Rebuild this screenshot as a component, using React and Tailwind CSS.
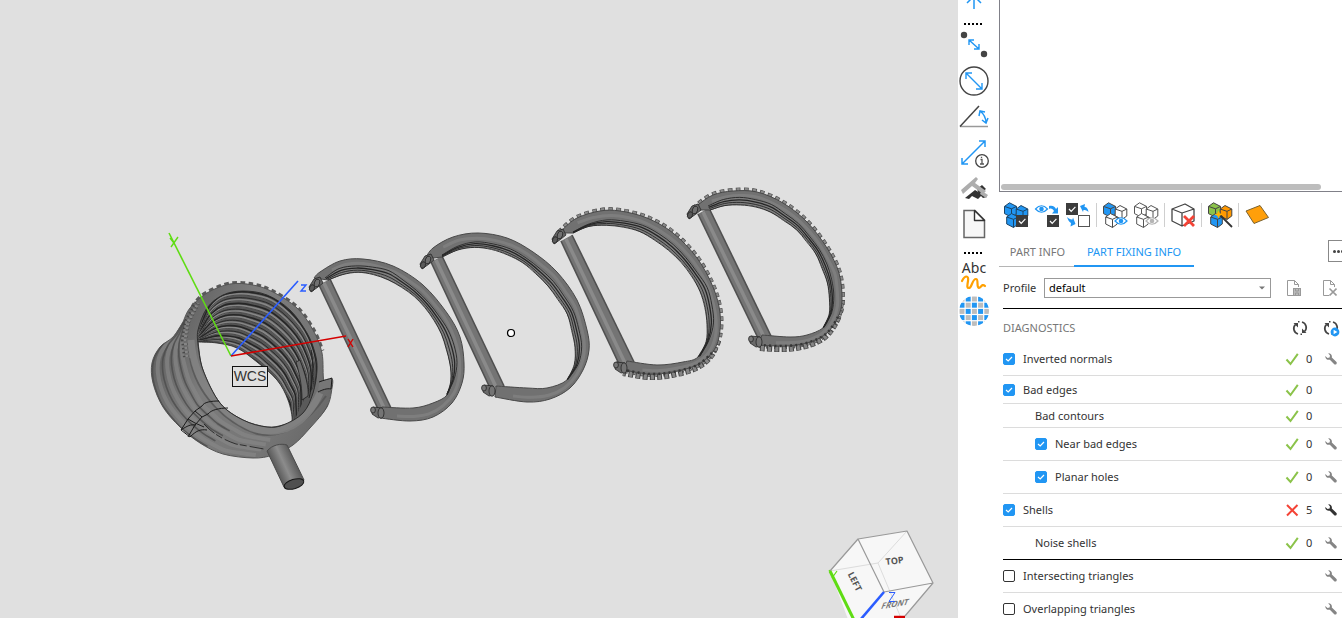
import React from "react";

/* ---------- geometry helpers for the 3D scene ---------- */

const parse = (s) => s.split(" ").map((p) => p.split(",").map(Number));

function resample(pts, n) {
  const len = [0];
  for (let i = 1; i < pts.length; i++)
    len.push(len[i - 1] + Math.hypot(pts[i][0] - pts[i - 1][0], pts[i][1] - pts[i - 1][1]));
  const total = len[len.length - 1];
  const out = [];
  let j = 1;
  for (let i = 0; i < n; i++) {
    const t = (total * i) / (n - 1);
    while (j < pts.length - 1 && len[j] < t) j++;
    const k = (t - len[j - 1]) / (len[j] - len[j - 1] || 1);
    out.push([
      pts[j - 1][0] + (pts[j][0] - pts[j - 1][0]) * k,
      pts[j - 1][1] + (pts[j][1] - pts[j - 1][1]) * k,
    ]);
  }
  return out;
}

function mix(a, b, t, n = 14) {
  const ra = resample(a, n);
  const rb = resample(b, n);
  return ra.map((p, i) => [p[0] + (rb[i][0] - p[0]) * t, p[1] + (rb[i][1] - p[1]) * t]);
}

function curve(pts, start = "M") {
  let d = `${start}${pts[0][0]} ${pts[0][1]}`;
  for (let i = 0; i < pts.length - 1; i++) {
    const p0 = pts[i - 1] || pts[i];
    const p1 = pts[i];
    const p2 = pts[i + 1];
    const p3 = pts[i + 2] || p2;
    d += `C${(p1[0] + (p2[0] - p0[0]) / 6).toFixed(2)} ${(p1[1] + (p2[1] - p0[1]) / 6).toFixed(2)} ${(p2[0] - (p3[0] - p1[0]) / 6).toFixed(2)} ${(p2[1] - (p3[1] - p1[1]) / 6).toFixed(2)} ${p2[0].toFixed(2)} ${p2[1].toFixed(2)}`;
  }
  return d;
}

const RINGS = [
  {
    outer: "314,278 320,272 340,261 363,259 393,266 423,285 447,313 460,337 464,363 462,383 452,403 433,417 410,421 380,418",
    inner: "328,280 347,273 363,272 383,277 410,292 430,313 443,337 450,363 451,380 447,395 433,403 413,408 382,407",
    seam: "325,278 340,268 363,265 390,271 413,287 433,307 448,330 457,353 457,373 447,394",
    bar: "319,285 330,279 391,408 379,411",
    top: [315, 285],
    end: [377, 411],
    bumps: false,
  },
  {
    outer: "425,259 433,248 453,237 478,233 507,238 533,252 557,272 577,300 587,330 589,350 583,370 570,388 550,399 527,402 495,397",
    inner: "442,257 460,249 478,247 500,251 527,265 550,288 567,313 575,343 575,363 567,380 547,388 527,388 496,386",
    seam: "442,255 460,245 480,241 507,247 533,262 557,285 573,310 582,340 581,360 568,379",
    bar: "431,262 442,256 504,386 490,388",
    top: [426, 262],
    end: [488, 389],
    bumps: false,
  },
  {
    outer: "559,233 562,230 577,218 600,211 620,211 647,218 673,233 697,258 713,287 720,313 719,337 712,353 697,365 673,372 650,374 624,370",
    inner: "573,233 590,226 613,225 637,230 663,245 687,268 702,295 707,317 707,340 698,357 683,362 657,365 627,361",
    seam: "573,232 593,222 613,219 640,224 667,238 690,262 707,287 714,313 713,333 700,356",
    bar: "561,241 572,235 634,362 619,364",
    top: [558, 237],
    end: [620, 366],
    bumps: true,
  },
  {
    outer: "694,210 698,205 713,195 733,191 757,192 783,203 807,222 827,248 839,273 842,300 838,317 827,333 810,342 787,346 759,345",
    inner: "710,210 727,205 750,205 773,213 797,230 815,252 827,280 830,303 829,317 823,328 807,335 790,337 762,335",
    seam: "708,206 727,198 747,197 773,205 797,222 817,245 830,270 834,293 833,310 824,327",
    bar: "698,214 709,208 771,336 758,338",
    top: [693, 212],
    end: [755, 340],
    bumps: true,
  },
];

function Ring({ ring }) {
  const outer = parse(ring.outer);
  const inner = parse(ring.inner);
  const seam = parse(ring.seam);
  const hole = inner.slice(0, -3);
  const body = `${curve(outer)}L${curve([...inner].reverse(), "")}Z`;
  const lowest = outer.slice(-6);
  const [tx, ty] = ring.top;
  const [ex, ey] = ring.end;
  const [b0, b1, b2, b3] = parse(ring.bar);
  return (
    <g>
      {ring.bumps && (
        <g fill="none">
          <path d={curve(outer)} stroke="#4a4a4a" strokeWidth="6" strokeDasharray="4.600 3.400" />
          <path d={curve(outer)} stroke="#8a8a8a" strokeWidth="5" strokeDasharray="3.200 4.800" strokeDashoffset="-0.700" />
          <g transform="translate(-1 3)">
            <path d={curve(lowest)} stroke="#444" strokeWidth="6" strokeDasharray="5 2.200" />
            <path d={curve(lowest)} stroke="#868686" strokeWidth="5" strokeDasharray="3 4.200" strokeDashoffset="-1" />
          </g>
        </g>
      )}
      <path d={`M${b0}L${b1}L${b2}L${b3}Z`} fill="#747474" />
      <path d={`M${b0}L${b3}`} stroke="#505050" strokeWidth="1.600" />
      <path d={`M${b0[0] + 5} ${b0[1] - 2}L${b3[0] + 6} ${b3[1] - 1}`} stroke="#8a8a8a" strokeWidth="3.500" />
      <path d={`M${b1}L${b2}`} stroke="#505050" strokeWidth="1.600" />
      <path d={body} fill="#717171" stroke="#484848" strokeWidth="1" />
      <path d={curve(mix(outer, inner, 0.3, 20).slice(1, -1))} fill="none" stroke="#848484" strokeWidth="3" opacity="0.700" />
      <path d={`${curve(seam)}L${curve([...hole].reverse(), "")}Z`} fill="#7e7e7e" />
      {[0, 0.33, 0.66, 1].map((t, i) => (
        <path key={t} d={curve(mix(seam, hole, t))} fill="none" stroke="#262626" strokeWidth={i === 1 ? 1.3 : 0.9} />
      ))}
      {ring.bumps && (
        <path d={curve(lowest.slice(1))} fill="none" stroke="#363636" strokeWidth="2.500" strokeDasharray="2 3.200" />
      )}
      <g stroke="#262626" strokeWidth="0.800">
        <path d={`M${tx - 6} ${ty + 2}l5-8 6-2 3 6-5 4-7 5z`} fill="#666" />
        <ellipse cx={tx - 3} cy={ty + 3} rx="2.400" ry="3.400" fill="#5a5a5a" transform={`rotate(20 ${tx - 3} ${ty + 3})`} />
        <ellipse cx={tx + 2} cy={ty - 2} rx="2.600" ry="4" fill="#707070" transform={`rotate(20 ${tx + 2} ${ty - 2})`} />
        <path d={`M${ex - 4} ${ey - 4}l9 1 1 9-5 1-6-4z`} fill="#6a6a6a" />
        <ellipse cx={ex - 4} cy={ey - 1} rx="2.400" ry="3" fill="#777" />
        <ellipse cx={ex + 4} cy={ey + 2} rx="3" ry="5.200" fill="#747474" />
      </g>
    </g>
  );
}

const COIL = {
  silhouette:
    "183,322 173,337 160,347 152,363 153,383 163,407 180,427 200,443 223,454 253,458 273,455 293,445 310,428 327,407 332,388 332,379 324,381 322,353 313,330 297,308 273,292 253,285 230,284 207,293 190,308 183,322",
  left: "183,322 173,337 160,347 152,363 153,383 163,407 180,427 200,443 223,454 253,458",
  front: "186,318 184,340 188,360 195,380 207,402 227,420 250,433 273,437",
  rim: "198,345 198,330 207,308 223,295 243,291 267,295 290,310 307,333 315,353 317,370 313,393 303,413 283,425 267,427 243,420 220,403 203,370 198,345",
  rimTop: "198,335 207,308 223,295 243,291 267,295 290,310 307,333 315,353 317,370 314,393",
  holeTop: "198,342 217,343 237,348 257,362 277,380 290,403 292,424",
  hole: "198,342 217,343 237,348 257,362 277,380 288,400 292,421 283,425 267,427 243,420 220,403 203,370 198,342",
  bumps: "187,354 184,340 187,322 195,304 207,293 230,284 253,285 273,292 297,308 313,330 322,351",
};

function Coil() {
  const left = parse(COIL.left);
  const front = parse(COIL.front);
  const rimTop = parse(COIL.rimTop);
  const holeTop = parse(COIL.holeTop);
  const steps = Array.from({ length: 11 }, (_, i) => i / 10);
  return (
    <g>
      <clipPath id="coil-rim">
        <path d={curve(parse(COIL.rim))} />
      </clipPath>
      <clipPath id="coil-body">
        <path d={curve(parse(COIL.silhouette))} />
      </clipPath>
      <path d={curve(parse(COIL.bumps))} fill="none" stroke="#5a5a5a" strokeWidth="5" strokeDasharray="4.600 3.400" />
      <path d={curve(parse(COIL.silhouette))} fill="url(#coil-shade)" stroke="#555" />
      <g fill="none" clipPath="url(#coil-body)">
        {[0.14, 0.4, 0.64, 0.86].map((t) => (
          <path key={t} d={curve(mix(left, front, t))} stroke="#868686" strokeWidth="4" opacity="0.700" />
        ))}
        {[0, 0.27, 0.52, 0.75].map((t) => (
          <path key={t} d={curve(mix(left, front, t).slice(0, 11))} stroke="#4a4a4a" strokeWidth="1.600" opacity="0.750" />
        ))}
        <path d="M190 358C196 394 226 424 258 434C290 440 312 416 326 396" stroke="#555" strokeWidth="2" opacity="0.800" />
        <path d="M278 458C298 446 318 424 328 404L336 410L300 458Z" fill="#4b4b4b" />
        <path d="M191 340C194 385 222 415 252 428C282 438 306 424 320 393" stroke="#858585" strokeWidth="7" opacity="0.800" />
      </g>
      <path d="M186 357L184 340L187 322L197 303" fill="none" stroke="#3a3a3a" strokeWidth="6" strokeDasharray="1.400 2.600" opacity="0.750" />
      <path d="M187 357L185 340L188 322L198 303" fill="none" stroke="#858585" strokeWidth="3" strokeDasharray="2.200 1.800" />
      <path d={curve(parse(COIL.rim))} fill="#555" />
      <g clipPath="url(#coil-rim)" fill="none">
        {steps.map((t, i) => (
          <g key={t}>
            <path d={curve(mix(rimTop, holeTop, t + 0.04))} stroke="#868686" strokeWidth="2.400" />
            <path d={curve(mix(rimTop, holeTop, t))} stroke="#262626" strokeWidth={i % 2 ? 0.9 : 1.6} />
            <path d={curve(mix(rimTop, holeTop, t + 0.055))} stroke="#333" strokeWidth="0.700" />
          </g>
        ))}
        <path d="M305 398L299 410L293 424L317 410L320 380Z" fill="#5a5a5a" />
        <path d="M300 360C306 376 309 388 308 396L302 400C302 384 299 372 296 362Z" fill="#6c6c6c" stroke="#222" strokeWidth="0.800" />
        <path d="M311 350C314 365 313 384 309 398" stroke="#242424" />
      </g>
      <path d={curve(parse(COIL.hole))} fill="#e0e0e0" stroke="#333" strokeWidth="0.900" clipPath="url(#coil-rim)" />
      <path d={curve(parse(COIL.rim))} fill="none" stroke="#2a2a2a" strokeWidth="0.900" />
      <g fill="none" stroke="#1c1c1c" strokeWidth="1">
        <path d="M219 401C211 401 204 402 202 406L195 411M228 408C219 408 211 410 208 414L202 417M195 411L202 417M195 411L188 419L181 430L190 437M202 417L195 425L188 437M188 419L195 423L204 427" />
        <path d="M204 424C213 434 224 440 236 444L264 449" strokeDasharray="14 2 7 3" strokeWidth="0.800" />
        <path d="M181 430C187 426 191 424 196 425M190 437C196 431 200 429 207 430" />
        <path d="M319 382C324 380 329 379 332 378L331 389C327 388 322 390 318 392" fill="#777" />
      </g>
      <path d="M267 451C272 445 281 443 287 445L304 480L284 487Z" fill="url(#post-shade)" stroke="#4a4a4a" />
      <ellipse cx="294" cy="484" rx="10.200" ry="4.600" fill="#505050" stroke="#171717" transform="rotate(-17 294 484)" />
    </g>
  );
}

function Scene() {
  return (
    <svg
      viewBox="0 0 958 618"
      preserveAspectRatio="xMinYMin slice"
      className="block h-full w-full"
      role="img"
      aria-label="3D view"
      fontFamily="'Liberation Sans', Arial, sans-serif"
    >
      <defs>
        <linearGradient id="coil-shade" x1="0" y1="0.3" x2="1" y2="0.8">
          <stop offset="0" stopColor="#5c5c5c" />
          <stop offset="0.35" stopColor="#7c7c7c" />
          <stop offset="0.75" stopColor="#757575" />
          <stop offset="1" stopColor="#666" />
        </linearGradient>
        <linearGradient id="post-shade" gradientUnits="userSpaceOnUse" x1="275" y1="470" x2="297" y2="460">
          <stop offset="0" stopColor="#555" />
          <stop offset="0.45" stopColor="#8c8c8c" />
          <stop offset="1" stopColor="#505050" />
        </linearGradient>
      </defs>
      {RINGS.map((r) => (
        <Ring key={r.bar} ring={r} />
      ))}
      <Coil />

      <g fill="none" strokeWidth="1.600">
        <path d="M169 233L231 356" stroke="#5fdc14" />
        <path d="M231 356L298 281" stroke="#2a5cff" />
        <path d="M231 356L346 336" stroke="#d40000" />
        <path d="M170 238L174 243M178 237L171 247" stroke="#5fdc14" strokeWidth="1.400" />
        <path d="M301 285H306L301 291H306" stroke="#2a5cff" strokeWidth="1.400" />
        <path d="M348 339L353 347M353 339L348 347" stroke="#d40000" strokeWidth="1.400" />
      </g>
      <rect x="232.500" y="366.500" width="35" height="20" fill="#e0e0e0" stroke="#111" />
      <text x="250" y="381" textAnchor="middle" fontSize="14" fill="#333">
        WCS
      </text>
      <circle cx="511" cy="333" r="3.500" fill="#fff" stroke="#000" strokeWidth="1.200" />

      <g strokeLinejoin="round">
        <path d="M858 539L907 531L933 583L905 616L900 630H852L830 571Z" fill="#f7f7f7" />
        <path d="M878 563L907 531M878 563L830 571M878 563L901 618" fill="none" stroke="#dcdcdc" />
        <path d="M858 539L907 531L933 583L884 592ZM858 539L830 571M933 583L905 616" fill="none" stroke="#999" strokeWidth="1.200" />
      </g>
      <g fill="#555" fontWeight="700" fontFamily="'Open Sans', sans-serif" textAnchor="middle">
        <text fontSize="9" transform="translate(895 564) rotate(-7)">TOP</text>
        <text fontSize="9" transform="translate(852 583) rotate(63)">LEFT</text>
        <text fontSize="8" fill="#777" transform="translate(894 607) rotate(-9) skewX(-30)">FRONT</text>
      </g>
      <path d="M830 571L854 620" stroke="#5fdc14" strokeWidth="3" />
      <path d="M829 570L833 576M837 571L832 578" stroke="#5fdc14" strokeWidth="1.200" />
      <path d="M884 592L861 619" stroke="#2a5cff" strokeWidth="2.600" />
      <path d="M889 592.500H895L889 601.500H895" fill="none" stroke="#2a5cff" />
      <path d="M894 617H905" stroke="#d40000" strokeWidth="2.500" />
    </svg>
  );
}

/* ---------- measuring tool strip ---------- */

const BLUE = "#2196f3";

function ToolButton({ label, size = "h-9", children, box = "0 0 32 36" }) {
  return (
    <button type="button" aria-label={label} className={`${size} block w-8 shrink-0`}>
      <svg viewBox={box} className="block h-full w-full overflow-visible" fill="none">
        {children}
      </svg>
    </button>
  );
}

function Dots({ size }) {
  return (
    <div className={`${size} flex w-8 shrink-0 items-center justify-center gap-0.5 pr-0.5`}>
      {[0, 1, 2, 3, 4].map((i) => (
        <span key={i} className="size-0.5 bg-black" />
      ))}
    </div>
  );
}

function ToolStrip() {
  const globe = [];
  for (let r = 0; r < 5; r++)
    for (let c = 0; c < 5; c++)
      globe.push(
        <rect key={`${r}${c}`} x={1.5 + c * 6.2} y={5.5 + r * 6.2} width="5" height="5" fill={(r + c) % 2 ? BLUE : "#bdbdbd"} />
      );
  return (
    <nav aria-label="Measure tools" className="flex w-[41px] shrink-0 flex-col bg-white">
      <ToolButton label="Up" size="h-5" box="0 0 32 20">
        <path d="M16 9V-4M9 3L16-4L23 3" stroke={BLUE} strokeWidth="1.500" />
      </ToolButton>
      <Dots size="h-[7px]" />
      <ToolButton label="Measure points">
        <circle cx="6" cy="8" r="3.200" fill="#444" />
        <circle cx="26" cy="27" r="3.200" fill="#444" />
        <path d="M11 13L21 22M11 18V13H16M21 17V22H16" stroke={BLUE} strokeWidth="1.400" />
      </ToolButton>
      <ToolButton label="Measure diameter">
        <circle cx="16" cy="18" r="14" stroke="#444" strokeWidth="1.400" />
        <path d="M8 10L24 26M8 16V10H14M24 20V26H18" stroke={BLUE} strokeWidth="1.400" />
      </ToolButton>
      <ToolButton label="Measure angle">
        <path d="M2 27.500H30" stroke="#999" strokeWidth="1.500" />
        <path d="M2 27.500L21 7" stroke="#444" strokeWidth="1.500" />
        <path d="M22 12C26 15 28 19 28 24M21 17L22 12L27 13M24 21L28 24L30 19" stroke={BLUE} strokeWidth="1.500" />
      </ToolButton>
      <ToolButton label="Measure info">
        <path d="M4 29L27 6M4 23V29H10M21 6H27V12" stroke={BLUE} strokeWidth="1.500" />
        <circle cx="24" cy="26" r="6.300" fill="#fff" stroke="#444" strokeWidth="1.300" />
        <path d="M22.500 24.500H24V29M22 29H26M23.500 21.800V23" stroke="#555" strokeWidth="1.300" />
      </ToolButton>
      <ToolButton label="Caliper">
        <path d="M7 27L17 19L29 26L25 27L23 25L20 28L14 25L11 28Z" fill="#333" />
        <path d="M19 18L24 14L28 18L21 23Z" fill="#333" />
        <path d="M3 19L18 6L20 8L17 12L28 20L25 23L14 15L5 23Z" fill="#adadad" />
        <path d="M24 20L30 24L28 27L22 23Z" fill="#adadad" />
      </ToolButton>
      <ToolButton label="New page">
        <path d="M6 3.500H17L26.500 13V30.500H6Z" fill="#f7f7f7" stroke="#666" strokeWidth="1.500" />
        <path d="M16.500 3.500V13.500H26.500Z" fill="#fff" stroke="#333" strokeWidth="1.400" strokeLinejoin="round" />
      </ToolButton>
      <Dots size="h-5" />
      <ToolButton label="Annotation" size="h-7" box="0 0 32 28">
        <text x="16" y="10" textAnchor="middle" fontSize="14" fill="#333" fontFamily="'Noto Sans', sans-serif">
          Abc
        </text>
        <path d="M4 18C7 12 11 12 10 18C9 24 9 25 11 25C14 25 14 16 18 16C21 16 18 24 21 25C23 25 24 20 27 23" stroke="#ffa000" strokeWidth="2.200" strokeLinecap="round" />
      </ToolButton>
      <ToolButton label="Grid" size="h-10" box="0 0 32 40">
        <clipPath id="globe">
          <circle cx="16" cy="20" r="15" />
        </clipPath>
        <g clipPath="url(#globe)">{globe}</g>
      </ToolButton>
    </nav>
  );
}

/* ---------- part toolbar ---------- */

function Cube({ x, y, s = 6, fill = "#fff", stroke = "#444" }) {
  const h = s * 0.4;
  return (
    <g fill={fill} stroke={stroke} strokeWidth="1" strokeLinejoin="round">
      <path d={`M${x - s} ${y - s + h}L${x - 1} ${y - s - h / 2}L${x + s} ${y - s + h}V${y + s - h}L${x + 1} ${y + s + h / 2}L${x - s} ${y + s - h}Z`} />
      <path d={`M${x - s} ${y - s + h}L${x + 1} ${y - s + h * 2}L${x + s} ${y - s + h}M${x + 1} ${y - s + h * 2}V${y + s + h / 2}`} fill="none" />
    </g>
  );
}

const Cubes = ({ a, b, c, stroke }) => (
  <g>
    <Cube x={6.5} y={7} s={6} fill={a} stroke={stroke} />
    <Cube x={18} y={9.5} s={5.8} fill={b} stroke={stroke} />
    <Cube x={8.5} y={17.5} s={5.8} fill={c} stroke={stroke} />
  </g>
);

const DarkCheck = ({ x, y }) => (
  <g>
    <rect x={x} y={y} width="12" height="12" fill="#3c3c3c" />
    <path d={`M${x + 3} ${y + 6}l2.200 2.400l4.200-4.600`} fill="none" stroke="#fff" strokeWidth="1.200" />
  </g>
);

const Eye = ({ x, y, color = BLUE }) => (
  <g>
    <path d={`M${x - 6} ${y}q6-6.500 12 0q-6 6.500-12 0z`} fill="#fff" stroke={color} strokeWidth="1.200" />
    <circle cx={x} cy={y} r="2.300" fill={color} />
  </g>
);

function IconButton({ label, children }) {
  return (
    <button type="button" aria-label={label} className="block size-6 shrink-0">
      <svg viewBox="0 0 24 24" className="block size-6 overflow-visible">
        {children}
      </svg>
    </button>
  );
}

const Divider = () => <span className="mx-1.5 h-6 w-px shrink-0 bg-[#cfcfcf]" />;

function PartToolbar() {
  return (
    <div className="flex h-[46px] shrink-0 items-center pl-[5px]">
      <div className="flex gap-[7px]">
        <IconButton label="Select parts">
          <Cubes a={BLUE} b={BLUE} c={BLUE} stroke="#1b4466" />
          <DarkCheck x={12} y={12} />
        </IconButton>
        <IconButton label="Select visible">
          <Eye x={6.500} y={6} />
          <path d="M14 3C18 2 20 4 21 6L23 4V10.500H17L19 8C18 6 16 5 14 6Z" fill={BLUE} />
          <DarkCheck x={12} y={12} />
        </IconButton>
        <IconButton label="Invert selection">
          <DarkCheck x={0} y={0} />
          <path d="M14 3L19 1L18.500 4C21 4 22 6 22.500 9C20 7 19 7 17.500 7L17 9ZM9.500 21L4.500 23.500L5 20C3 19 2 17 1 14C3 16 5 16.500 6.500 16.500L7 14.500Z" fill={BLUE} />
          <rect x="12.500" y="12.500" width="11" height="11" fill="#fff" stroke="#555" />
        </IconButton>
      </div>
      <Divider />
      <div className="flex gap-[7px]">
        <IconButton label="Show parts">
          <Cubes a={BLUE} b="#fff" c="#fff" stroke="#4a4a4a" />
          <Eye x={18} y={18} />
        </IconButton>
        <IconButton label="Hide parts">
          <Cubes a="#fff" b="#fff" c="#fff" stroke="#555" />
          <Eye x={18} y={18} color="#b5b5b5" />
        </IconButton>
      </div>
      <Divider />
      <IconButton label="Delete part">
        <path d="M1 6L14 1L23 6V18L11 23L1 18ZM1 6L11 10L23 6M11 10V23" fill="#fff" stroke="#444" strokeWidth="1.300" strokeLinejoin="round" />
        <path d="M13 13L23 23M23 13L13 23" stroke="#f44336" strokeWidth="2.800" />
      </IconButton>
      <Divider />
      <IconButton label="Fix wizard">
        <Cubes a="#8bc34a" b="#ff9800" c={BLUE} stroke="#444" />
        <path d="M12 12L24 24" stroke="#333" strokeWidth="1.800" />
        <path d="M10.500 7.500L11.800 10.200L14.500 11.500L11.800 12.800L10.500 15.500L9.200 12.800L6.500 11.500L9.200 10.200Z" fill="#ffb300" />
      </IconButton>
      <Divider />
      <IconButton label="Plane">
        <path d="M1 8L15 2.500L23.500 14.500L9 20.500Z" fill="#ff9f0a" stroke="#7a6230" strokeLinejoin="round" />
      </IconButton>
    </div>
  );
}

/* ---------- diagnostics ---------- */

const Wrench = ({ dark }) => (
  <button type="button" aria-label="Fix" className="ml-[11px] block size-3 shrink-0">
    <svg viewBox="0 0 12 12" className={dark ? "block text-[#333]" : "block text-[#858585]"}>
      <path d="M3.200 0.300C5.500 0 7.400 1.800 6.800 4.400L11.500 9C12.400 10.400 11 12 9.500 11.400L4.800 6.700C2.300 7.300 0.100 5.600 0.300 3.100L2.500 5L4.600 4.600L5 2.500Z" fill="currentColor" />
    </svg>
  </button>
);

const Status = ({ ok }) => (
  <svg viewBox="0 0 12 12" className="block size-3 shrink-0 overflow-visible" fill="none" strokeWidth="2">
    {ok ? <path d="M0.500 6.500L4.500 11L11.800 0.800" stroke="#8bc34a" /> : <path d="M1 1L11.500 11.500M11.500 1L1 11.500" stroke="#f44336" />}
  </svg>
);

const ROWS = [
  { name: "Inverted normals", checked: true, count: 0, fix: true, h: "h-[33px]" },
  { name: "Bad edges", checked: true, count: 0, h: "h-7" },
  { name: "Bad contours", indent: true, count: 0, h: "h-6" },
  { name: "Near bad edges", indent: true, checked: true, count: 0, fix: true, h: "h-[33px]" },
  { name: "Planar holes", indent: true, checked: true, count: 0, fix: true, h: "h-[33px]" },
  { name: "Shells", checked: true, count: 5, fix: true, h: "h-[33px]" },
  { name: "Noise shells", indent: true, count: 0, fix: true, h: "h-[33px]", last: true },
  { name: "Intersecting triangles", checked: false, fix: true, h: "h-[33px]" },
  { name: "Overlapping triangles", checked: false, fix: true, h: "h-[33px]" },
];

function DiagnosticRow({ row }) {
  const line = row.last ? "border-black" : "border-[#dcdcdc]";
  return (
    <li className={`flex shrink-0 items-center border-b pr-[5px] ${row.h} ${line} ${row.indent ? "pl-8" : ""}`}>
      {row.checked === undefined ? (
        <span>{row.name}</span>
      ) : (
        <label className="flex items-center gap-2">
          <span className="grid size-3 shrink-0">
            <input
              type="checkbox"
              defaultChecked={row.checked}
              className="peer col-start-1 row-start-1 size-3 appearance-none rounded-xs border border-[#333] bg-white checked:border-[#2196f3] checked:bg-[#2196f3]"
            />
            <svg viewBox="0 0 12 12" className="pointer-events-none invisible col-start-1 row-start-1 size-3 peer-checked:visible" fill="none">
              <path d="M3 6L5.200 8L9 4" stroke="#fff" strokeWidth="1.200" />
            </svg>
          </span>
          <span>{row.name}</span>
        </label>
      )}
      <span className="ml-auto flex items-center">
        {row.count !== undefined && (
          <>
            <Status ok={row.count === 0} />
            <span className={row.fix ? "ml-2 w-2" : "mr-[23px] ml-2 w-2"}>{row.count}</span>
          </>
        )}
        {row.fix && <Wrench dark={row.count > 0} />}
      </span>
    </li>
  );
}

const Refresh = ({ label, play }) => (
  <button type="button" aria-label={label} className="block size-4 shrink-0">
    <svg viewBox="0 0 16 16" className="block size-4 overflow-visible" fill="none" stroke="#444" strokeWidth="1.700">
      <path d="M6 14C1.500 12.500 0.500 7.500 3.500 4.500M10 2C14.500 3.500 15.500 8.500 12.500 11.500" />
      <path d="M7.500 1.800H6M8.500 14.200H10" strokeWidth="1.400" />
      <path d="M1.500 3H6V7.500ZM14.500 13H10V8.500Z" fill="#444" stroke="none" />
      {play && (
        <g stroke="none">
          <circle cx="12" cy="12" r="4.400" fill={BLUE} />
          <path d="M10.600 9.700L14.400 12L10.600 14.300Z" fill="#fff" />
        </g>
      )}
    </svg>
  </button>
);

const PageIcon = ({ label, children }) => (
  <button type="button" aria-label={label} className="block h-4 w-3.5 shrink-0">
    <svg viewBox="0 0 14 16" className="block h-4 w-3.5" fill="none" stroke="#999">
      <path d="M6 15.500H0.500V0.500H7.500L11.500 4.500V7M7.500 0.500V4.500H11.500" />
      {children}
    </svg>
  </button>
);

function SidePanel() {
  return (
    <aside className="flex w-[343px] shrink-0 flex-col bg-white">
      <div className="flex h-48 shrink-0 items-end border-b border-l border-[#808088] pb-px pl-px">
        <div className="mr-[21px] h-1.5 flex-1 rounded-full bg-[#bdbdbd]" />
      </div>
      <PartToolbar />
      <div className="flex h-[29px] shrink-0 items-stretch justify-between">
        <div role="tablist" className="flex">
          <button type="button" role="tab" className="w-[75px] border-b border-[#b5b5b5] pl-0.5 text-center whitespace-nowrap text-[#777]">
            PART INFO
          </button>
          <button type="button" role="tab" aria-selected="true" className="w-[120px] border-b-2 border-[#2196f3] text-center whitespace-nowrap text-[#2196f3]">
            PART FIXING INFO
          </button>
        </div>
        <button type="button" aria-label="More" className="mt-0.5 flex h-[22px] w-3.5 items-center gap-px overflow-hidden border border-r-0 border-[#888] pl-1">
          <span className="size-[3px] shrink-0 rounded-full bg-[#444]" />
          <span className="size-[3px] shrink-0 rounded-full bg-[#444]" />
          <span className="size-[3px] shrink-0 rounded-full bg-[#444]" />
        </button>
      </div>
      <div className="ml-1 flex h-[42px] shrink-0 items-center border-b border-black pr-[5px]">
        <label htmlFor="profile" className="w-[41px]">
          Profile
        </label>
        <div className="grid flex-1">
          <select id="profile" className="col-start-1 row-start-1 h-5 appearance-none border border-[#999] bg-white pl-1 text-black">
            <option>default</option>
          </select>
          <svg viewBox="0 0 6 4" className="pointer-events-none col-start-1 row-start-1 mr-1.5 h-1 w-1.5 self-center justify-self-end">
            <path d="M0 0.500H6L3 3.500Z" fill="#777" />
          </svg>
        </div>
        <div className="ml-4 flex gap-[22px]">
          <PageIcon label="Save profile">
            <rect x="6.500" y="8.500" width="7" height="7" fill="#bbb" />
            <path d="M8.500 8.500V11H11.500V8.500M8.500 15.500V13H11.500V15.500" />
          </PageIcon>
          <PageIcon label="Delete profile">
            <path d="M6.500 8.500L13.500 15.500M13.500 8.500L6.500 15.500" strokeWidth="1.600" />
          </PageIcon>
        </div>
      </div>
      <div className="ml-1 flex h-[34px] shrink-0 items-center pt-1 pr-[3px]">
        <h2 className="mr-auto text-[#777]">DIAGNOSTICS</h2>
        <div className="flex gap-[15px]">
          <Refresh label="Refresh" />
          <Refresh label="Refresh automatically" play />
        </div>
      </div>
      <ul className="ml-1 flex shrink-0 flex-col">
        {ROWS.map((r) => (
          <DiagnosticRow key={r.name} row={r} />
        ))}
      </ul>
    </aside>
  );
}

export default function App() {
  return (
    <div className="flex h-screen overflow-hidden bg-white font-['Noto_Sans','Open_Sans',sans-serif] text-[11px] leading-4 text-[#333]">
      <main className="min-w-0 flex-1 bg-[#e0e0e0]">
        <Scene />
      </main>
      <ToolStrip />
      <SidePanel />
    </div>
  );
}
